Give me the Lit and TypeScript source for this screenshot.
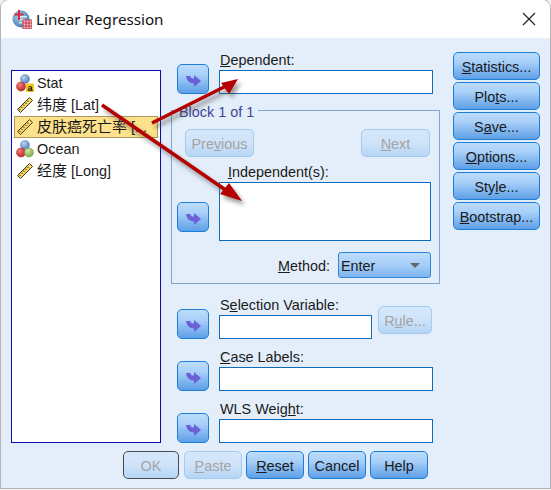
import { LitElement, html, css, svg } from "lit";
import { customElement } from "lit/decorators.js";

const arrowIcon = html`<svg class="arr" width="15" height="12" viewBox="0 0 15 12"><path fill="#6b60d6" d="M0 1h4.200c.2 1.600 1.400 2.600 3.800 2.600V0l7 6-7 6V8.400C3.500 8.400.6 5.500 0 1z"/></svg>`;

const ruler = html`<svg class="ico" width="18" height="18" viewBox="0 0 18 18">
  <path fill="#f6d662" stroke="#3a3720" stroke-width="1" d="M13.500 1.500l3 3-12 12-3-3z"/>
  <path stroke="#3a3720" stroke-width="1" fill="none" d="M11 4.500l1.500 1.500M9 6.500l1.500 1.500M7 8.500l1.500 1.500M5 10.500l1.500 1.500M3 12.500l1.500 1.500"/>
</svg>`;

const ball = (cx: number, cy: number, r: number, c1: string, c2: string, id: string) => svg`
  <defs><radialGradient id=${id} cx=".35" cy=".3" r=".8"><stop offset="0" stop-color=${c1}/><stop offset="1" stop-color=${c2}/></radialGradient></defs>
  <circle cx=${cx} cy=${cy} r=${r} fill="url(#${id})" stroke=${c2} stroke-width=".5"/>`;

const nominal = html`<svg class="ico" width="18" height="18" viewBox="0 0 18 18">
  ${ball(9, 5, 4.5, "#bcd4f0", "#4a78b8", "nb1")}
  ${ball(5, 12.5, 4.5, "#f08080", "#b81c1c", "nr1")}
  <rect x="10" y="9.500" width="8" height="8.500" rx="1" fill="#f5c518" />
  <text x="14" y="16.500" class="a">a</text>
</svg>`;

const ordinal = html`<svg class="ico" width="18" height="18" viewBox="0 0 18 18">
  ${ball(9, 5, 4.5, "#bcd4f0", "#4a78b8", "nb2")}
  ${ball(5, 12.5, 4.5, "#f08080", "#b81c1c", "nr2")}
  ${ball(13, 12.5, 4.5, "#cfe6a8", "#74a53f", "ng2")}
</svg>`;

const titleIcon = html`<svg width="20" height="20" viewBox="0 0 20 20">
  <defs><radialGradient id="tg" cx=".4" cy=".35" r=".8"><stop offset="0" stop-color="#a5d0ec"/><stop offset="1" stop-color="#2f6ea6"/></radialGradient></defs>
  <circle cx="9" cy="10" r="8.500" fill="url(#tg)"/>
  <path fill="#fff" opacity=".75" d="M7 7h8v1.500H7zM7 10h6v1.500H7zM7 13h4v1.500H7z"/>
  <path fill="#d8283c" d="M6 1h2v3.500h3.500v2H8V11H6V6.500H2.500v-2H6z"/>
  <rect x="11" y="11" width="9" height="9" fill="#f2c0c4" stroke="#c23a4c"/>
  <path stroke="#c23a4c" fill="none" d="M11 14h9M11 17h9M14 11v9M17 11v9"/>
</svg>`;

@customElement("app-root")
export class AppRoot extends LitElement {
  static styles = css`
    :host { display: block; width: 551px; height: 490px; background: #f3f3f3; font: 14.4px "Liberation Sans", "Noto Sans CJK SC", sans-serif; color: #1a1a1a; overflow: hidden; }
    * { box-sizing: border-box; }
    .window { position: relative; width: 549px; height: 488px; margin-left: 1px; background: #e3eefa; border-radius: 8px 8px 0 0; box-shadow: 0 0 0 1px #b4b4b4; overflow: hidden; display: flex; flex-direction: column; }
    .title { height: 38px; flex: none; background: #fff; display: flex; align-items: center; padding: 0 0 1px 11px; gap: 4px; font: 15.2px "Noto Sans", sans-serif; color: #111; }
    .title span { flex: 1; }
    .close { width: 14px; height: 14px; margin-right: 14px; }
    .body { flex: 1; display: flex; flex-direction: column; padding: 14px 10px 0; }
    .top { display: flex; height: 391px; }
    .list { width: 150px; height: 373px; margin-top: 18px; background: #fff; border: 1px solid #0a0ab4; padding: 1px 2px; flex: none; }
    .item { height: 22px; display: flex; align-items: center; gap: 3px; padding-left: 1px; white-space: nowrap; overflow: hidden; border: 1px solid transparent; line-height: 16px; }
    .item.sel { background: #fde18c; border-color: #a99a5c; }
    .zh { font-size: 15px; line-height: 1; }
    .ico { flex: none; }
    .a { font: bold 9px "Liberation Sans", sans-serif; text-anchor: middle; fill: #111; }
    .center { width: 269px; margin-left: 10px; flex: none; display: flex; flex-direction: column; }
    .row { display: flex; align-items: flex-end; padding-left: 6px; gap: 10px; }
    .arrow { width: 32px; height: 30px; flex: none; display: flex; align-items: center; justify-content: center; }
    .arr { margin-top: 3px; }
    .field { display: flex; flex-direction: column; }
    .lab { height: 18px; line-height: 16px; padding-left: 1px; white-space: nowrap; }
    .input { height: 24px; width: 214px; background: #fff; border: 1px solid #0f6cbd; }
    .btn { border: 1px solid #1b7fd9; border-radius: 5px; display: flex; align-items: center; justify-content: center; padding-top: 1px; background: linear-gradient(#bcdcfb 0%, #a9d0f8 35%, #8bbdf2 60%, #5f9fe6 100%); white-space: nowrap; }
    .btn.off { border-color: #a3cbf0; color: #a3a3a3; background: linear-gradient(#d5e7fa, #cfe3f9 50%, #b5d5f5); }
    .btn.def { border-color: #4a4a4a; }
    .group { position: relative; height: 174px; margin-top: 16px; border: 1px solid #7fa6cc; padding: 18px 8px 0 5px; display: flex; flex-direction: column; }
    .legend { position: absolute; left: 7px; top: -7px; padding: 0 4px 0 0; line-height: 16px; background: #e3eefa; color: #3f4496; }
    .nav { display: flex; justify-content: space-between; padding: 0 1px 0 8px; }
    .nav .btn { width: 69px; height: 28px; }
    .lab.ind { margin: 7px 0 0 51px; padding: 0; }
    .mid { display: flex; align-items: flex-start; gap: 10px; }
    .mid .arrow { margin-top: 20px; }
    .box { width: 212px; height: 59px; background: #fff; border: 1px solid #0f6cbd; }
    .method { display: flex; justify-content: flex-end; align-items: center; gap: 8px; margin-top: 11px; }
    .method span { padding-top: 1px; }
    .drop { width: 93px; height: 26px; border: 1px solid #2a85dc; border-radius: 3px; background: linear-gradient(#bcdcfb, #a6cef7 50%, #7fb5ef); display: flex; align-items: center; justify-content: space-between; padding: 0 10px 0 2px; }
    .sel-row { margin-top: 13px; position: relative; }
    .short { width: 153px; }
    .rule { width: 54px; height: 28px; margin: 0 0 5px -4px; }
    .gap { margin-top: 10px; }
    .side { margin-left: 13px; display: flex; flex-direction: column; gap: 2px; flex: none; }
    .side .btn { width: 87px; height: 28px; }
    .bottom { display: flex; margin: 8px 0 0 112px; gap: 4px; }
    .bottom .btn { width: 58px; height: 28px; }
    .bottom .w56 { width: 56px; margin-right: 1px; }
    .overlay { position: absolute; left: -1px; top: 0; pointer-events: none; filter: drop-shadow(3px 4px 2px rgba(70,70,70,.55)); }
  `;

  render() {
    return html`<div class="window">
      <div class="title">${titleIcon}<span>Linear Regression</span>
        <svg class="close" viewBox="0 0 14 14"><path d="M1 1l12 12M13 1L1 13" stroke="#222" stroke-width="1.200" fill="none"/></svg>
      </div>
      <div class="body">
        <div class="top">
          <div class="list">
            <div class="item">${nominal}<span>Stat</span></div>
            <div class="item">${ruler}<span><span class="zh">纬度</span> [Lat]</span></div>
            <div class="item sel">${ruler}<span><span class="zh">皮肤癌死亡率</span> [...</span></div>
            <div class="item">${ordinal}<span>Ocean</span></div>
            <div class="item">${ruler}<span><span class="zh">经度</span> [Long]</span></div>
          </div>
          <div class="center">
            <div class="row">
              <div class="btn arrow">${arrowIcon}</div>
              <div class="field"><div class="lab"><u>D</u>ependent:</div><div class="input"></div></div>
            </div>
            <div class="group">
              <div class="legend">Block 1 of 1</div>
              <div class="nav">
                <div class="btn off">Pre<u>v</u>ious</div>
                <div class="btn off"><u>N</u>ext</div>
              </div>
              <div class="lab ind"><u>I</u>ndependent(s):</div>
              <div class="mid">
                <div class="btn arrow">${arrowIcon}</div>
                <div class="box"></div>
              </div>
              <div class="method"><span><u>M</u>ethod:</span>
                <div class="drop"><span>Enter</span><svg width="10" height="5" viewBox="0 0 10 5"><path d="M0 0h10L5 5z" fill="#666"/></svg></div>
              </div>
            </div>
            <div class="row sel-row">
              <div class="btn arrow">${arrowIcon}</div>
              <div class="field"><div class="lab">S<u>e</u>lection Variable:</div><div class="input short"></div></div>
              <div class="btn off rule">R<u>u</u>le...</div>
            </div>
            <div class="row gap">
              <div class="btn arrow">${arrowIcon}</div>
              <div class="field"><div class="lab"><u>C</u>ase Labels:</div><div class="input"></div></div>
            </div>
            <div class="row gap">
              <div class="btn arrow">${arrowIcon}</div>
              <div class="field"><div class="lab">WLS Weig<u>h</u>t:</div><div class="input"></div></div>
            </div>
          </div>
          <div class="side">
            <div class="btn"><u>S</u>tatistics...</div>
            <div class="btn">Plo<u>t</u>s...</div>
            <div class="btn">S<u>a</u>ve...</div>
            <div class="btn"><u>O</u>ptions...</div>
            <div class="btn">Sty<u>l</u>e...</div>
            <div class="btn"><u>B</u>ootstrap...</div>
          </div>
        </div>
        <div class="bottom">
          <div class="btn off def w56">OK</div>
          <div class="btn off"><u>P</u>aste</div>
          <div class="btn"><u>R</u>eset</div>
          <div class="btn">Cancel</div>
          <div class="btn">Help</div>
        </div>
      </div>
      <svg class="overlay" width="551" height="490" viewBox="0 0 551 490">
        <path d="M152 123L228 85" stroke="#b50000" stroke-width="3.500" fill="none"/>
        <path d="M238 79L221 83 229 94z" fill="#b50000"/>
        <path d="M102 105L230 193" stroke="#b50000" stroke-width="3.500" fill="none"/>
        <path d="M242 201L220 194 229 183z" fill="#b50000"/>
      </svg>
    </div>`;
  }
}
